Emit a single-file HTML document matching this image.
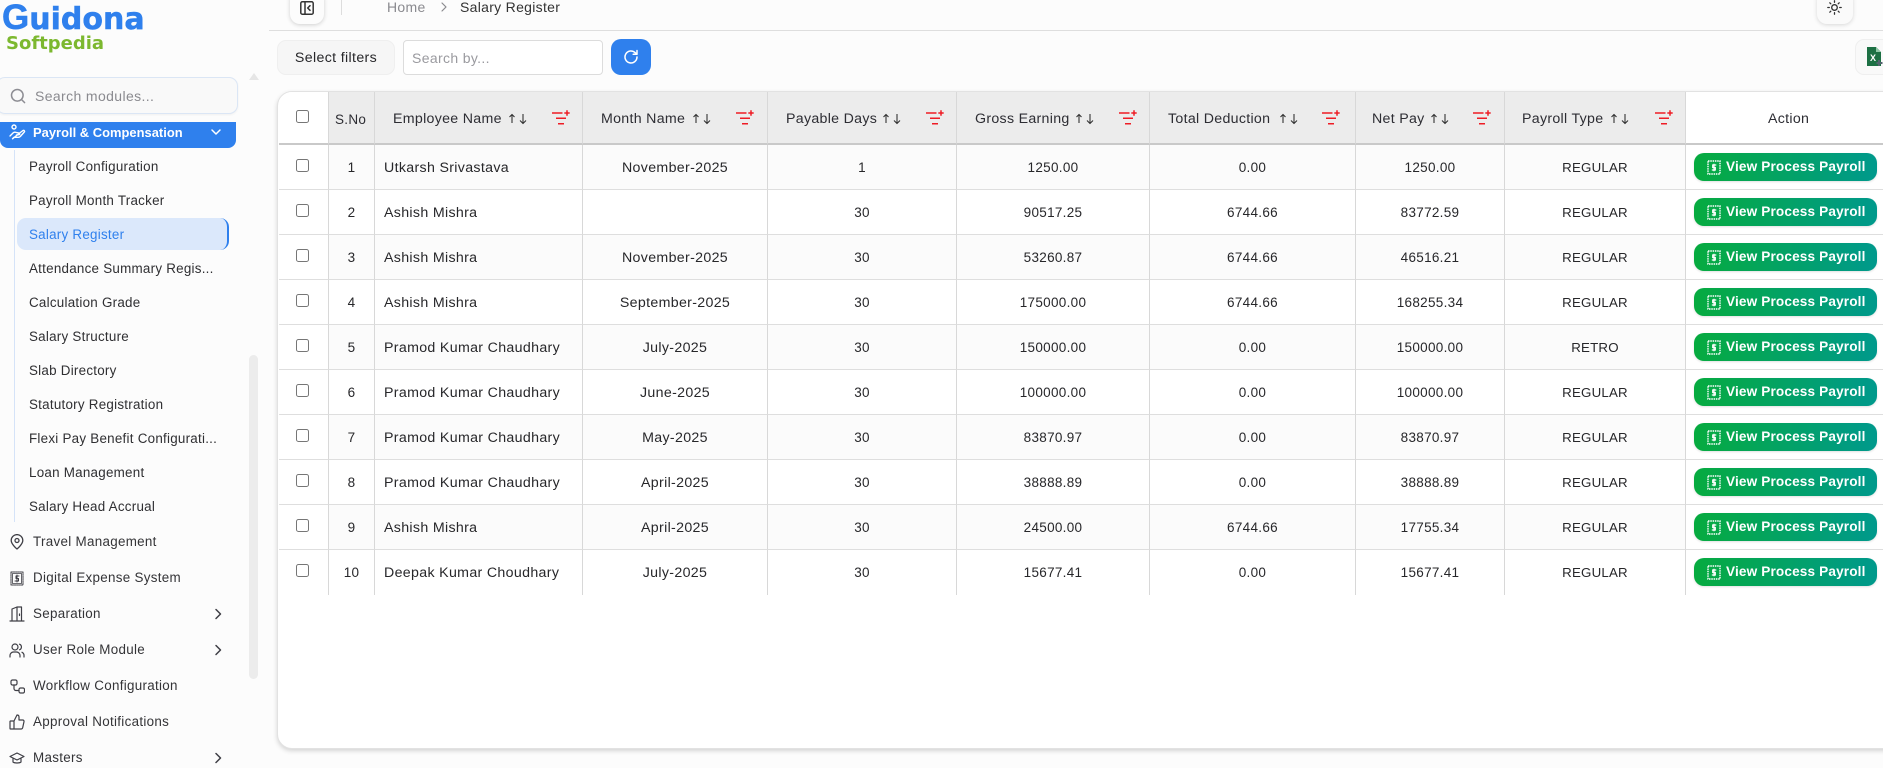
<!DOCTYPE html>
<html><head><meta charset="utf-8"><title>Salary Register</title>
<style>
*{box-sizing:border-box}
html,body{margin:0;padding:0}
body{width:1883px;height:766px;overflow:hidden;background:#fcfcfc;font-family:"Liberation Sans",sans-serif;color:#27272a;position:relative;font-size:14px}
.a{position:absolute;white-space:nowrap}
.logo1{left:2px;top:-4px;font-size:35px;font-weight:700;color:#2f80ed;line-height:44px;-webkit-text-stroke:.5px #2f80ed}
.logo1 span{font-family:"DejaVu Sans",sans-serif;font-size:30px;line-height:30px}
.logo2{left:6px;top:30px;font-family:"DejaVu Sans",sans-serif;font-size:18px;font-weight:700;color:#7cb82f;line-height:28px}
.sub{left:29px;font-size:13.4px;letter-spacing:.25px;line-height:20px;color:#2f2f32;margin-top:1px}
.main{left:33px;font-size:13.4px;letter-spacing:.3px;line-height:20px;color:#343437}
.ic{position:absolute;fill:none;stroke:#3f3f46;stroke-width:1.5;stroke-linecap:round;stroke-linejoin:round}
.card{left:277px;top:91px;width:1640px;height:658px;background:#fff;border:1px solid #e2e2e2;border-radius:15px 0 0 15px;box-shadow:0 2px 5px rgba(0,0,0,.16);overflow:hidden}
table{border-collapse:separate;border-spacing:0;table-layout:fixed;width:1605px;position:absolute;left:1px;top:0}
th{height:53px;background:#ececec;border-right:1px solid #d8d8d8;border-bottom:2px solid #c9c9c9;padding:0;font-weight:400}
td{height:45px;border-right:1px solid #d8d8d8;border-bottom:1px solid #dedede;text-align:center;font-size:13.5px;letter-spacing:.3px;color:#27272a;padding:2px 0 0;background:#fff;line-height:41px;vertical-align:top}
td:nth-child(3),td:nth-child(4){font-size:14.2px;letter-spacing:.33px;padding-top:3px}
td:nth-child(9){font-size:13.3px;letter-spacing:.2px}
td:first-child,td:last-child{padding:0}
tr:nth-child(odd) td{background:#fbfbfb}
tr:last-child td{border-bottom:0}
td:first-child,th:first-child,th:last-child{background:#fff!important}
td:last-child{background:#fff!important;border-right:0}
th:last-child{border-right:0}
td.n{text-align:left;padding-left:9px}
.cb{display:block;width:13px;height:13px;border:1px solid #767676;border-radius:2.5px;margin-left:17px;background:#fff;position:relative;top:-1px}
td .cb{top:14px}
.h{position:absolute;top:0;line-height:55px;font-size:14.2px;letter-spacing:.3px;color:#2d2d33;white-space:nowrap}
.fl{position:absolute;top:18px}
.ar{position:absolute;top:20px}
.btn{display:block;width:183px;height:28px;margin:8px 0 0 8px;border-radius:10px;background:linear-gradient(90deg,#06ab3f,#00998c);color:#fff;font-weight:700;font-size:13.6px;letter-spacing:.15px;line-height:28px;text-align:left;padding-left:32px;position:relative;box-shadow:0 1px 2px rgba(0,0,0,.12)}
.btn svg{position:absolute;left:13px;top:7px}
</style></head><body>

<div class="a logo1">G<span>uidona</span></div>
<div class="a logo2">Softpedia</div>

<div class="a" style="left:-4px;top:77px;width:242px;height:37px;background:#f9f9f9;border:1px solid #dbe6f5;border-radius:9px;box-shadow:0 1px 2px rgba(0,0,0,.05)"></div>
<svg class="ic" style="left:10px;top:88px;stroke:#8d8d93" width="16" height="16" viewBox="0 0 16 16"><circle cx="7.3" cy="7.3" r="5.8"/><path d="M11.6 11.6l3 3"/></svg>
<div class="a" style="left:35px;top:86px;font-size:14px;letter-spacing:.38px;line-height:20px;color:#8a8a8f">Search modules...</div>
<div class="a" style="left:249px;top:73px;width:0;height:0;border-left:5px solid transparent;border-right:5px solid transparent;border-bottom:7px solid #e6e6e6"></div>

<div class="a" style="left:0;top:122px;width:236px;height:26px;background:#2f80ed;border-radius:0 0 8px 8px"></div>
<svg class="ic" style="left:9px;top:124px;stroke:#fff;stroke-width:1.4" width="17" height="17" viewBox="0 0 17 17"><circle cx="5" cy="3" r="2"/><path d="M1 12l3-3c1-1 2-1 3-.6l3 .6c1 .3 1 1.6-.2 1.7L7.5 11M10 9.5l4-3c1-.6 2 .6 1.3 1.5l-4 4.5c-.6.6-1.3.8-2 .8H5l-1.5 1.5z"/></svg>
<div class="a" style="left:33px;top:122px;font-size:12.9px;font-weight:700;letter-spacing:.03px;line-height:21px;color:#fff">Payroll &amp; Compensation</div>
<svg class="ic" style="left:210px;top:126px;stroke:#fff" width="12" height="12" viewBox="0 0 12 12"><path d="M2 4l4 4 4-4"/></svg>

<div class="a" style="left:14px;top:150px;width:1px;height:372px;background:#d5e3f8"></div>
<div class="a sub" style="top:156px">Payroll Configuration</div>
<div class="a sub" style="top:190px">Payroll Month Tracker</div>
<div class="a" style="left:17px;top:218px;width:212px;height:32px;background:#dbe8fb;border-radius:9px;border-right:2px solid #2f80ed"></div>
<div class="a sub" style="top:224px;color:#2f80ed">Salary Register</div>
<div class="a sub" style="top:258px">Attendance Summary Regis...</div>
<div class="a sub" style="top:292px">Calculation Grade</div>
<div class="a sub" style="top:326px">Salary Structure</div>
<div class="a sub" style="top:360px">Slab Directory</div>
<div class="a sub" style="top:394px">Statutory Registration</div>
<div class="a sub" style="top:428px">Flexi Pay Benefit Configurati...</div>
<div class="a sub" style="top:462px">Loan Management</div>
<div class="a sub" style="top:496px">Salary Head Accrual</div>

<div class="a" style="left:249px;top:355px;width:9px;height:324px;background:#ececec;border-radius:5px"></div>

<svg class="ic" style="left:10px;top:534px;stroke-width:1.3" width="14" height="16" viewBox="0 0 14 16"><path d="M7 15s5.8-4.700 5.800-8.600A5.800 5.800 0 0 0 1.200 6.400C1.200 10.300 7 15 7 15z"/><circle cx="7" cy="6.500" r="2"/></svg>
<div class="a main" style="top:532px">Travel Management</div>
<svg class="ic" style="left:10px;top:571px;stroke-width:1" width="14" height="15" viewBox="0 0 14 15"><rect x="1" y="1" width="12" height="13" stroke-dasharray="1.500 .8"/><rect x="2.500" y="2.500" width="9" height="10" stroke-width=".8"/><path d="M9 5H6v2.500h2.500V10H5M7 4v7" stroke-width="1"/></svg>
<div class="a main" style="top:568px">Digital Expense System</div>
<svg class="ic" style="left:9px;top:606px;stroke-width:1.2" width="16" height="16" viewBox="0 0 16 16"><path d="M1 15h14M3 15V3l5-2h4.500v14M8 1v14"/><path d="M10.500 8v1.500"/></svg>
<div class="a main" style="top:604px">Separation</div>
<svg class="ic" style="left:212px;top:608px" width="12" height="12" viewBox="0 0 12 12"><path d="M4 1.500L8.500 6 4 10.500"/></svg>
<svg class="ic" style="left:9px;top:643px;stroke-width:1.2" width="16" height="15" viewBox="0 0 16 15"><circle cx="6" cy="4" r="3"/><path d="M1 14v-1.500A3.500 3.500 0 0 1 4.500 9h3a3.500 3.500 0 0 1 3.500 3.500V14M10.500 1.200a3 3 0 0 1 0 5.600M13 9.300a3.500 3.500 0 0 1 2 3.200V14"/></svg>
<div class="a main" style="top:640px">User Role Module</div>
<svg class="ic" style="left:212px;top:644px" width="12" height="12" viewBox="0 0 12 12"><path d="M4 1.500L8.500 6 4 10.500"/></svg>
<svg class="ic" style="left:10px;top:679px;stroke-width:1.2" width="15" height="15" viewBox="0 0 15 15"><rect x="1" y="1" width="6" height="5" rx="1.500"/><rect x="9" y="9" width="5.500" height="5" rx="1.500"/><path d="M4 6v3.500a2 2 0 0 0 2 2h3"/></svg>
<div class="a main" style="top:676px">Workflow Configuration</div>
<svg class="ic" style="left:9px;top:714px;stroke-width:1.2" width="16" height="16" viewBox="0 0 16 16"><path d="M5 7v8M1.500 7H5l3-6c1.300 0 2 .9 2 2v3h3.700c.9 0 1.500.8 1.300 1.600l-1.300 6c-.2.800-.9 1.400-1.700 1.400H1.500A.5.500 0 0 1 1 14.500v-7a.5.500 0 0 1 .5-.5z"/></svg>
<div class="a main" style="top:712px">Approval Notifications</div>
<svg class="ic" style="left:9px;top:751px;stroke-width:1.2" width="16" height="14" viewBox="0 0 16 14"><path d="M8 2L1 5.500 8 9l7-3.500zM4 7.500V11c1.500 1.300 6.500 1.300 8 0V7.500"/></svg>
<div class="a main" style="top:748px">Masters</div>
<svg class="ic" style="left:212px;top:752px" width="12" height="12" viewBox="0 0 12 12"><path d="M4 1.500L8.500 6 4 10.500"/></svg>

<div class="a" style="left:269px;top:30px;width:1614px;height:1px;background:#dedede"></div>
<div class="a" style="left:290px;top:-10px;width:34px;height:34px;background:#fcfcfc;border-radius:10px;box-shadow:0 1px 4px rgba(0,0,0,.18)"></div>
<svg class="ic" style="left:300px;top:1px;stroke:#333" width="14" height="14" viewBox="0 0 14 14"><rect x=".8" y=".8" width="12.400" height="12.400" rx="1.500"/><path d="M5 1v12M10 4.700L7.700 7l2.300 2.300"/></svg>
<div class="a" style="left:341px;top:0;width:1px;height:15px;background:#ddd"></div>
<div class="a" style="left:387px;top:-3px;font-size:14px;letter-spacing:.3px;line-height:20px;color:#8a8a8f">Home</div>
<svg class="ic" style="left:439px;top:1px;stroke:#8a8a8f;stroke-width:1.200" width="10" height="12" viewBox="0 0 10 12"><path d="M3 2l4 4-4 4"/></svg>
<div class="a" style="left:460px;top:-3px;font-size:14px;letter-spacing:.3px;line-height:20px;color:#333">Salary Register</div>

<div class="a" style="left:1817px;top:-10px;width:36px;height:34px;background:#fafafa;border-radius:10px;box-shadow:0 1px 4px rgba(0,0,0,.15)"></div>
<svg class="ic" style="left:1827px;top:0;stroke:#333;stroke-width:1.300" width="15" height="15" viewBox="0 0 15 15"><circle cx="7.500" cy="7.500" r="2.800"/><path d="M7.500.8v1.500M7.500 12.700v1.500M.8 7.500h1.500M12.700 7.500h1.500M2.800 2.800l1 1M11.200 11.200l1 1M2.800 12.200l1-1M11.200 3.800l1-1"/></svg>

<div class="a" style="left:277px;top:40px;width:118px;height:35px;background:#f6f6f6;border:1px solid #efefef;border-radius:9px;text-align:center;font-size:14.2px;letter-spacing:.35px;line-height:35px;color:#27272a">Select filters</div>
<div class="a" style="left:403px;top:40px;width:200px;height:35px;background:#fff;border:1px solid #dcdcdc;border-radius:4px;padding-left:8px;font-size:14px;letter-spacing:.35px;line-height:34px;color:#9a9a9f">Search by...</div>
<div class="a" style="left:611px;top:39px;width:40px;height:36px;background:#2f80ed;border-radius:10px"></div>
<svg class="ic" style="left:623px;top:49px;stroke:#fff;stroke-width:1.500" width="16" height="16" viewBox="0 0 16 16"><path d="M14 8a6 6 0 1 1-1.800-4.300L14 5.300M14 1.500v3.800h-3.800"/></svg>

<div class="a" style="left:1855px;top:39px;width:40px;height:36px;background:#f9f9f9;border:1px solid #efefef;border-radius:9px"></div>
<svg class="a" style="left:1867px;top:47px" width="16" height="20" viewBox="0 0 16 20"><path d="M0 0h9l5 5v14H0z" fill="#1d7044"/><path d="M9 0l5 5H9z" fill="#8fc7a6"/><text x="3" y="14" font-family="Liberation Sans" font-size="9" font-weight="700" fill="#fff">X</text><path d="M12 13v6M9.500 16h6" stroke="#54636e" stroke-width="2"/></svg>

<div class="a card">
<table>
<colgroup><col style="width:50px"><col style="width:46px"><col style="width:208px"><col style="width:185px"><col style="width:189px"><col style="width:193px"><col style="width:206px"><col style="width:149px"><col style="width:181px"><col style="width:198px"></colgroup>
<thead><tr>
<th><span class="cb"></span></th>
<th style="position:relative"><span class="h" style="left:6px;font-size:13.5px">S.No</span></th>
<th></th><th></th><th></th><th></th><th></th><th></th><th></th>
<th style="position:relative"><span class="h" style="left:82px">Action</span></th>
</tr></thead>
<tbody>
<tr><td><span class="cb"></span></td><td>1</td><td class="n">Utkarsh Srivastava</td><td>November-2025</td><td>1</td><td>1250.00</td><td>0.00</td><td>1250.00</td><td>REGULAR</td><td><span class="btn"><svg width="14" height="15" viewBox="0 0 14 15" fill="none" stroke="#fff"><rect x="1" y="1" width="12" height="13" stroke-dasharray="1.500 .8" stroke-width="1.400"/><path d="M9.300 5H5.700v2.500h2.600V10H4.800M7 3.800v7.400" stroke-width="1.200"/></svg>View Process Payroll</span></td></tr>
<tr><td><span class="cb"></span></td><td>2</td><td class="n">Ashish Mishra</td><td></td><td>30</td><td>90517.25</td><td>6744.66</td><td>83772.59</td><td>REGULAR</td><td><span class="btn"><svg width="14" height="15" viewBox="0 0 14 15" fill="none" stroke="#fff"><rect x="1" y="1" width="12" height="13" stroke-dasharray="1.500 .8" stroke-width="1.400"/><path d="M9.300 5H5.700v2.500h2.600V10H4.800M7 3.800v7.400" stroke-width="1.200"/></svg>View Process Payroll</span></td></tr>
<tr><td><span class="cb"></span></td><td>3</td><td class="n">Ashish Mishra</td><td>November-2025</td><td>30</td><td>53260.87</td><td>6744.66</td><td>46516.21</td><td>REGULAR</td><td><span class="btn"><svg width="14" height="15" viewBox="0 0 14 15" fill="none" stroke="#fff"><rect x="1" y="1" width="12" height="13" stroke-dasharray="1.500 .8" stroke-width="1.400"/><path d="M9.300 5H5.700v2.500h2.600V10H4.800M7 3.800v7.400" stroke-width="1.200"/></svg>View Process Payroll</span></td></tr>
<tr><td><span class="cb"></span></td><td>4</td><td class="n">Ashish Mishra</td><td>September-2025</td><td>30</td><td>175000.00</td><td>6744.66</td><td>168255.34</td><td>REGULAR</td><td><span class="btn"><svg width="14" height="15" viewBox="0 0 14 15" fill="none" stroke="#fff"><rect x="1" y="1" width="12" height="13" stroke-dasharray="1.500 .8" stroke-width="1.400"/><path d="M9.300 5H5.700v2.500h2.600V10H4.800M7 3.800v7.400" stroke-width="1.200"/></svg>View Process Payroll</span></td></tr>
<tr><td><span class="cb"></span></td><td>5</td><td class="n">Pramod Kumar Chaudhary</td><td>July-2025</td><td>30</td><td>150000.00</td><td>0.00</td><td>150000.00</td><td>RETRO</td><td><span class="btn"><svg width="14" height="15" viewBox="0 0 14 15" fill="none" stroke="#fff"><rect x="1" y="1" width="12" height="13" stroke-dasharray="1.500 .8" stroke-width="1.400"/><path d="M9.300 5H5.700v2.500h2.600V10H4.800M7 3.800v7.400" stroke-width="1.200"/></svg>View Process Payroll</span></td></tr>
<tr><td><span class="cb"></span></td><td>6</td><td class="n">Pramod Kumar Chaudhary</td><td>June-2025</td><td>30</td><td>100000.00</td><td>0.00</td><td>100000.00</td><td>REGULAR</td><td><span class="btn"><svg width="14" height="15" viewBox="0 0 14 15" fill="none" stroke="#fff"><rect x="1" y="1" width="12" height="13" stroke-dasharray="1.500 .8" stroke-width="1.400"/><path d="M9.300 5H5.700v2.500h2.600V10H4.800M7 3.800v7.400" stroke-width="1.200"/></svg>View Process Payroll</span></td></tr>
<tr><td><span class="cb"></span></td><td>7</td><td class="n">Pramod Kumar Chaudhary</td><td>May-2025</td><td>30</td><td>83870.97</td><td>0.00</td><td>83870.97</td><td>REGULAR</td><td><span class="btn"><svg width="14" height="15" viewBox="0 0 14 15" fill="none" stroke="#fff"><rect x="1" y="1" width="12" height="13" stroke-dasharray="1.500 .8" stroke-width="1.400"/><path d="M9.300 5H5.700v2.500h2.600V10H4.800M7 3.800v7.400" stroke-width="1.200"/></svg>View Process Payroll</span></td></tr>
<tr><td><span class="cb"></span></td><td>8</td><td class="n">Pramod Kumar Chaudhary</td><td>April-2025</td><td>30</td><td>38888.89</td><td>0.00</td><td>38888.89</td><td>REGULAR</td><td><span class="btn"><svg width="14" height="15" viewBox="0 0 14 15" fill="none" stroke="#fff"><rect x="1" y="1" width="12" height="13" stroke-dasharray="1.500 .8" stroke-width="1.400"/><path d="M9.300 5H5.700v2.500h2.600V10H4.800M7 3.800v7.400" stroke-width="1.200"/></svg>View Process Payroll</span></td></tr>
<tr><td><span class="cb"></span></td><td>9</td><td class="n">Ashish Mishra</td><td>April-2025</td><td>30</td><td>24500.00</td><td>6744.66</td><td>17755.34</td><td>REGULAR</td><td><span class="btn"><svg width="14" height="15" viewBox="0 0 14 15" fill="none" stroke="#fff"><rect x="1" y="1" width="12" height="13" stroke-dasharray="1.500 .8" stroke-width="1.400"/><path d="M9.300 5H5.700v2.500h2.600V10H4.800M7 3.800v7.400" stroke-width="1.200"/></svg>View Process Payroll</span></td></tr>
<tr><td><span class="cb"></span></td><td>10</td><td class="n">Deepak Kumar Choudhary</td><td>July-2025</td><td>30</td><td>15677.41</td><td>0.00</td><td>15677.41</td><td>REGULAR</td><td><span class="btn"><svg width="14" height="15" viewBox="0 0 14 15" fill="none" stroke="#fff"><rect x="1" y="1" width="12" height="13" stroke-dasharray="1.500 .8" stroke-width="1.400"/><path d="M9.300 5H5.700v2.500h2.600V10H4.800M7 3.800v7.400" stroke-width="1.200"/></svg>View Process Payroll</span></td></tr>
</tbody>
</table>

<span class="h" style="left:115px">Employee Name</span>
<svg class="ar" style="left:229px" width="20" height="14" viewBox="0 0 20 14" fill="none" stroke="#333" stroke-width="1.100"><path d="M5 11V2.500M2.500 5L5 2.500 7.500 5M16 2v9.500M13 8.500l3 3 3-3"/></svg>
<svg class="fl" style="left:274px" width="18" height="16" viewBox="0 0 18 16" fill="none" stroke="#ee1c25" stroke-width="1.500"><path d="M0 3h10.500M4 8.300h10M6 13.700h6M15 .3v5.400M12.300 3h5.400"/></svg>
<span class="h" style="left:323px">Month Name</span>
<svg class="ar" style="left:413px" width="20" height="14" viewBox="0 0 20 14" fill="none" stroke="#333" stroke-width="1.100"><path d="M5 11V2.500M2.500 5L5 2.500 7.500 5M16 2v9.500M13 8.500l3 3 3-3"/></svg>
<svg class="fl" style="left:458px" width="18" height="16" viewBox="0 0 18 16" fill="none" stroke="#ee1c25" stroke-width="1.500"><path d="M0 3h10.500M4 8.300h10M6 13.700h6M15 .3v5.400M12.300 3h5.400"/></svg>
<span class="h" style="left:508px">Payable Days</span>
<svg class="ar" style="left:603px" width="20" height="14" viewBox="0 0 20 14" fill="none" stroke="#333" stroke-width="1.100"><path d="M5 11V2.500M2.500 5L5 2.500 7.500 5M16 2v9.500M13 8.500l3 3 3-3"/></svg>
<svg class="fl" style="left:648px" width="18" height="16" viewBox="0 0 18 16" fill="none" stroke="#ee1c25" stroke-width="1.500"><path d="M0 3h10.500M4 8.300h10M6 13.700h6M15 .3v5.400M12.300 3h5.400"/></svg>
<span class="h" style="left:697px">Gross Earning</span>
<svg class="ar" style="left:796px" width="20" height="14" viewBox="0 0 20 14" fill="none" stroke="#333" stroke-width="1.100"><path d="M5 11V2.500M2.500 5L5 2.500 7.500 5M16 2v9.500M13 8.500l3 3 3-3"/></svg>
<svg class="fl" style="left:841px" width="18" height="16" viewBox="0 0 18 16" fill="none" stroke="#ee1c25" stroke-width="1.500"><path d="M0 3h10.500M4 8.300h10M6 13.700h6M15 .3v5.400M12.300 3h5.400"/></svg>
<span class="h" style="left:890px">Total Deduction</span>
<svg class="ar" style="left:1000px" width="20" height="14" viewBox="0 0 20 14" fill="none" stroke="#333" stroke-width="1.100"><path d="M5 11V2.500M2.500 5L5 2.500 7.500 5M16 2v9.500M13 8.500l3 3 3-3"/></svg>
<svg class="fl" style="left:1044px" width="18" height="16" viewBox="0 0 18 16" fill="none" stroke="#ee1c25" stroke-width="1.500"><path d="M0 3h10.500M4 8.300h10M6 13.700h6M15 .3v5.400M12.300 3h5.400"/></svg>
<span class="h" style="left:1094px">Net Pay</span>
<svg class="ar" style="left:1151px" width="20" height="14" viewBox="0 0 20 14" fill="none" stroke="#333" stroke-width="1.100"><path d="M5 11V2.500M2.500 5L5 2.500 7.500 5M16 2v9.500M13 8.500l3 3 3-3"/></svg>
<svg class="fl" style="left:1195px" width="18" height="16" viewBox="0 0 18 16" fill="none" stroke="#ee1c25" stroke-width="1.500"><path d="M0 3h10.500M4 8.300h10M6 13.700h6M15 .3v5.400M12.300 3h5.400"/></svg>
<span class="h" style="left:1244px">Payroll Type</span>
<svg class="ar" style="left:1331px" width="20" height="14" viewBox="0 0 20 14" fill="none" stroke="#333" stroke-width="1.100"><path d="M5 11V2.500M2.500 5L5 2.500 7.500 5M16 2v9.500M13 8.500l3 3 3-3"/></svg>
<svg class="fl" style="left:1377px" width="18" height="16" viewBox="0 0 18 16" fill="none" stroke="#ee1c25" stroke-width="1.500"><path d="M0 3h10.500M4 8.300h10M6 13.700h6M15 .3v5.400M12.300 3h5.400"/></svg>
</div>
</body></html>
